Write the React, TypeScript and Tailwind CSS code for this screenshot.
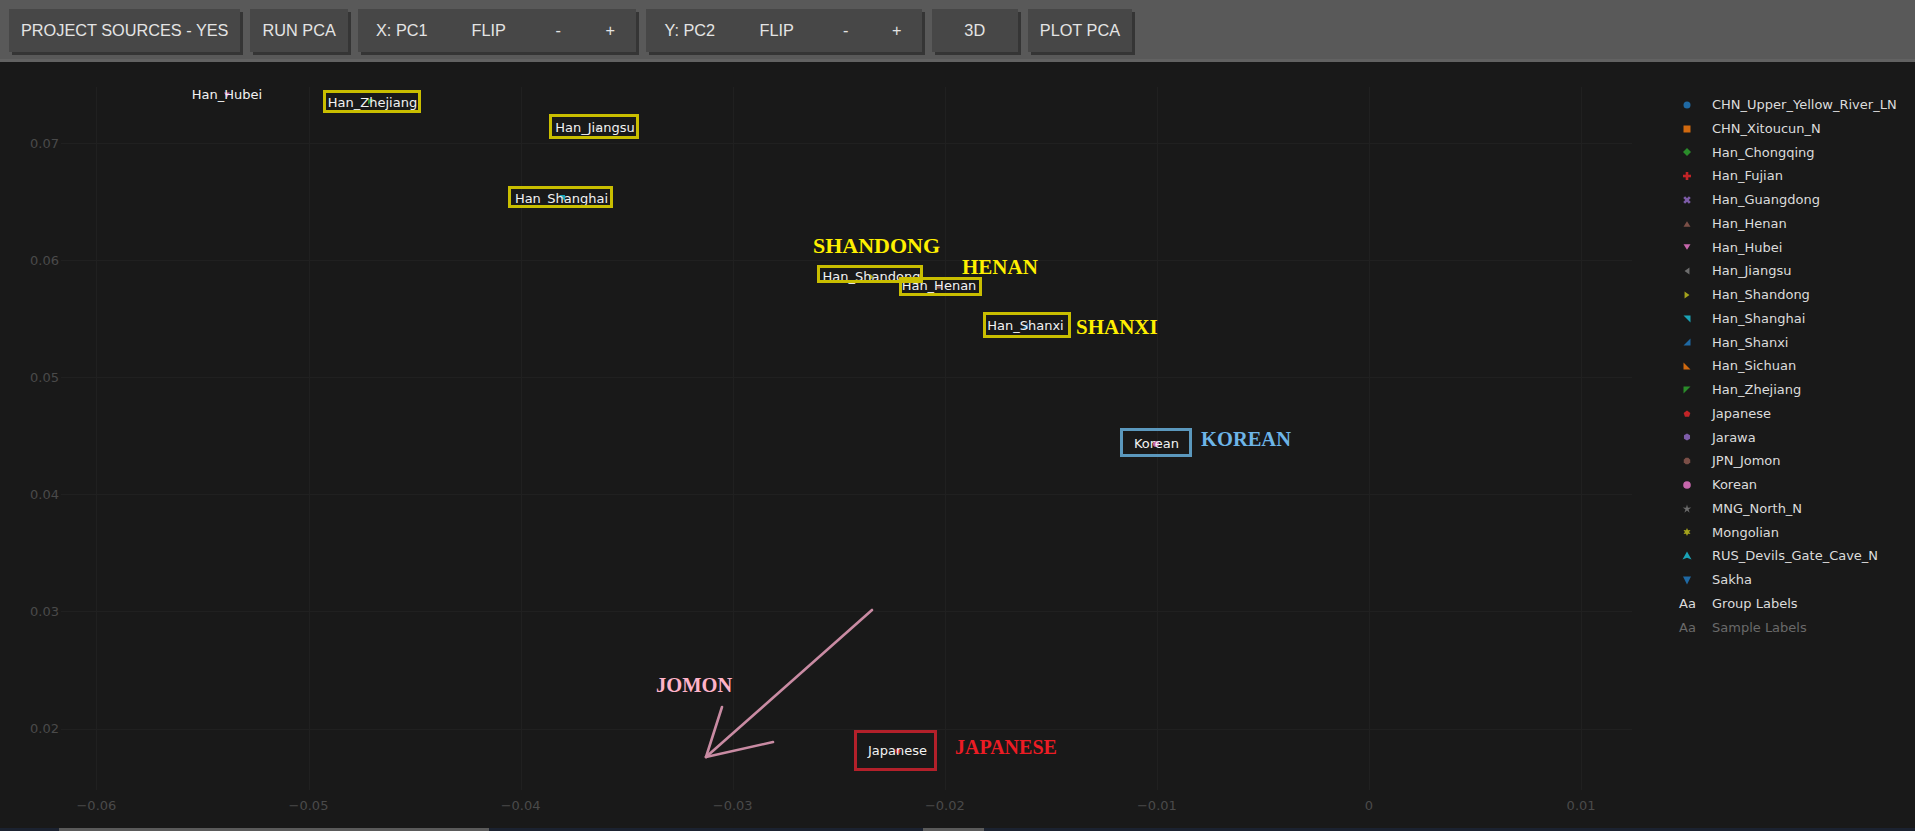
import React from "react";

type Shape =
  | "circle"
  | "square"
  | "diamond"
  | "plus"
  | "cross"
  | "triUp"
  | "triDown"
  | "triLeft"
  | "triRight"
  | "cornerTR"
  | "cornerBR"
  | "cornerBL"
  | "cornerTL"
  | "pentagon"
  | "hexagon"
  | "octagon"
  | "star5"
  | "star6"
  | "bigUp"
  | "bigDown";

const C = {
  blue: "#1f69a3",
  orange: "#d0690f",
  green: "#2a8c2a",
  red: "#c22427",
  purple: "#7d5ca8",
  brown: "#7b4f47",
  pink: "#c666ab",
  gray: "#6d6d6d",
  olive: "#a3a21c",
  cyan: "#1aa3b6",
};

const GROUPS: { name: string; shape: Shape; color: string }[] = [
  { name: "CHN_Upper_Yellow_River_LN", shape: "circle", color: C.blue },
  { name: "CHN_Xitoucun_N", shape: "square", color: C.orange },
  { name: "Han_Chongqing", shape: "diamond", color: C.green },
  { name: "Han_Fujian", shape: "plus", color: C.red },
  { name: "Han_Guangdong", shape: "cross", color: C.purple },
  { name: "Han_Henan", shape: "triUp", color: C.brown },
  { name: "Han_Hubei", shape: "triDown", color: C.pink },
  { name: "Han_Jiangsu", shape: "triLeft", color: C.gray },
  { name: "Han_Shandong", shape: "triRight", color: C.olive },
  { name: "Han_Shanghai", shape: "cornerTR", color: C.cyan },
  { name: "Han_Shanxi", shape: "cornerBR", color: C.blue },
  { name: "Han_Sichuan", shape: "cornerBL", color: C.orange },
  { name: "Han_Zhejiang", shape: "cornerTL", color: C.green },
  { name: "Japanese", shape: "pentagon", color: C.red },
  { name: "Jarawa", shape: "hexagon", color: C.purple },
  { name: "JPN_Jomon", shape: "octagon", color: C.brown },
  { name: "Korean", shape: "circle", color: C.pink },
  { name: "MNG_North_N", shape: "star5", color: C.gray },
  { name: "Mongolian", shape: "star6", color: C.olive },
  { name: "RUS_Devils_Gate_Cave_N", shape: "bigUp", color: C.cyan },
  { name: "Sakha", shape: "bigDown", color: C.blue },
];

function poly(x: number, y: number, r: number, n: number, rot = -Math.PI / 2) {
  const pts: string[] = [];
  for (let i = 0; i < n; i++) {
    const a = rot + (i * 2 * Math.PI) / n;
    pts.push(`${x + r * Math.cos(a)},${y + r * Math.sin(a)}`);
  }
  return pts.join(" ");
}

function star(x: number, y: number, r: number, inner: number, n: number) {
  const pts: string[] = [];
  for (let i = 0; i < n * 2; i++) {
    const a = -Math.PI / 2 + (i * Math.PI) / n;
    const rr = i % 2 === 0 ? r : inner;
    pts.push(`${x + rr * Math.cos(a)},${y + rr * Math.sin(a)}`);
  }
  return pts.join(" ");
}

function Marker({ shape, x, y, s, fill }: { shape: Shape; x: number; y: number; s: number; fill: string }) {
  switch (shape) {
    case "circle":
      return <circle cx={x} cy={y} r={s} fill={fill} />;
    case "square":
      return <rect x={x - s} y={y - s} width={s * 2} height={s * 2} fill={fill} />;
    case "diamond":
      return <polygon points={`${x},${y - s - 0.5} ${x + s + 0.5},${y} ${x},${y + s + 0.5} ${x - s - 0.5},${y}`} fill={fill} />;
    case "plus":
    case "cross":
      return (
        <g fill={fill} transform={shape === "cross" ? `rotate(45 ${x} ${y})` : undefined}>
          <rect x={x - s - 0.5} y={y - 1.3} width={s * 2 + 1} height={2.6} />
          <rect x={x - 1.3} y={y - s - 0.5} width={2.6} height={s * 2 + 1} />
        </g>
      );
    case "triUp":
      return <polygon points={`${x},${y - s * 0.8} ${x + s},${y + s * 0.8} ${x - s},${y + s * 0.8}`} fill={fill} />;
    case "triDown":
      return <polygon points={`${x - s},${y - s * 0.8} ${x + s},${y - s * 0.8} ${x},${y + s * 0.8}`} fill={fill} />;
    case "triLeft":
      return <polygon points={`${x + s * 0.7},${y - s} ${x + s * 0.7},${y + s} ${x - s * 0.7},${y}`} fill={fill} />;
    case "triRight":
      return <polygon points={`${x - s * 0.7},${y - s} ${x - s * 0.7},${y + s} ${x + s * 0.7},${y}`} fill={fill} />;
    case "cornerTR":
      return <polygon points={`${x - s},${y - s} ${x + s},${y - s} ${x + s},${y + s}`} fill={fill} />;
    case "cornerBR":
      return <polygon points={`${x + s},${y - s} ${x + s},${y + s} ${x - s},${y + s}`} fill={fill} />;
    case "cornerBL":
      return <polygon points={`${x - s},${y - s} ${x - s},${y + s} ${x + s},${y + s}`} fill={fill} />;
    case "cornerTL":
      return <polygon points={`${x - s},${y - s} ${x + s},${y - s} ${x - s},${y + s}`} fill={fill} />;
    case "pentagon":
      return <polygon points={poly(x, y, s, 5)} fill={fill} />;
    case "hexagon":
      return <polygon points={poly(x, y, s, 6)} fill={fill} />;
    case "octagon":
      return <polygon points={poly(x, y, s, 8, Math.PI / 8)} fill={fill} />;
    case "star5":
      return <polygon points={star(x, y, s + 1, s * 0.45, 5)} fill={fill} />;
    case "star6":
      return <polygon points={star(x, y, s + 0.5, s * 0.6, 6)} fill={fill} />;
    case "bigUp":
      return <polygon points={`${x},${y - s - 1} ${x + s + 1},${y + s} ${x},${y + s * 0.5} ${x - s - 1},${y + s}`} fill={fill} />;
    case "bigDown":
      return <polygon points={`${x - s - 0.5},${y - s} ${x + s + 0.5},${y - s} ${x},${y + s + 1}`} fill={fill} />;
  }
}

// axis mapping: 0.01 units is ~212px across and ~117px down
const xOf = (v: number) => 1369 + v * 21210;
const yOf = (v: number) => 143 + (0.07 - v) * 11710;

const X_TICKS = [-0.06, -0.05, -0.04, -0.03, -0.02, -0.01, 0, 0.01];
const Y_TICKS = [0.07, 0.06, 0.05, 0.04, 0.03, 0.02];

const POINTS: { label: string; shape: Shape; color: string; mx: number; my: number; tx: number; ty: number }[] = [
  { label: "Han_Hubei", shape: "triDown", color: C.pink, mx: 227, my: 95, tx: 227, ty: 94 },
  { label: "Han_Zhejiang", shape: "cornerTL", color: C.green, mx: 371, my: 102, tx: 372.5, ty: 102 },
  { label: "Han_Jiangsu", shape: "triLeft", color: C.gray, mx: 597, my: 128, tx: 595, ty: 127 },
  { label: "Han_Shanghai", shape: "cornerTR", color: C.cyan, mx: 562, my: 198, tx: 561.5, ty: 198 },
  { label: "Han_Shandong", shape: "triRight", color: C.olive, mx: 872, my: 277, tx: 871.5, ty: 276 },
  { label: "Han_Henan", shape: "triUp", color: C.brown, mx: 939, my: 286, tx: 939, ty: 285 },
  { label: "Han_Shanxi", shape: "cornerBR", color: C.blue, mx: 1025, my: 326, tx: 1025.5, ty: 325 },
  { label: "Korean", shape: "circle", color: C.pink, mx: 1156, my: 444, tx: 1156.5, ty: 443 },
  { label: "Japanese", shape: "pentagon", color: C.red, mx: 898, my: 751, tx: 897.5, ty: 750 },
];

// highlight boxes drawn around selected labels: [left, top, right, bottom, colour]
const BOXES: [number, number, number, number, string][] = [
  [323, 90, 421, 113, "#c9be00"],
  [549, 114, 639, 139, "#c9be00"],
  [508, 186, 613, 208, "#c9be00"],
  [817, 265, 923, 283, "#c9be00"],
  [899, 277, 982, 296, "#c9be00"],
  [983, 312, 1071, 338, "#c9be00"],
  [1120, 428, 1192, 457, "#5b98bd"],
  [854, 730, 937, 771, "#b3202a"],
];

const NOTES: { text: string; x: number; y: number; size: number; color: string }[] = [
  { text: "SHANDONG", x: 813, y: 253, size: 22, color: "#fff000" },
  { text: "HENAN", x: 962, y: 274, size: 21, color: "#fff000" },
  { text: "SHANXI", x: 1076, y: 334, size: 21, color: "#fff000" },
  { text: "KOREAN", x: 1201, y: 446, size: 20.5, color: "#6db5e8" },
  { text: "JOMON", x: 656, y: 692, size: 20.5, color: "#ffb3c9" },
  { text: "JAPANESE", x: 955, y: 754, size: 20, color: "#ec1c24" },
];

function Segment({ label, w }: { label: string; w: string }) {
  return <div className={`flex h-full items-center justify-center ${w}`}>{label}</div>;
}

function Toolbar() {
  const btn = "flex h-[43px] items-center bg-[#474747] shadow-[3px_3px_0_#353535]";
  return (
    <div className="flex h-[62px] shrink-0 items-start gap-[10px] border-b-[3px] border-[#626262] bg-[#595959] pt-[9px] pl-[9px] text-[16.3px] text-[#e4e4e4] font-['Liberation_Sans',Arial,sans-serif]">
      <div className={`${btn} px-3`}>PROJECT SOURCES - YES</div>
      <div className={`${btn} px-3`}>RUN PCA</div>
      <div className={btn}>
        <Segment label="X: PC1" w="w-[88px]" />
        <Segment label="FLIP" w="w-[86px]" />
        <Segment label="-" w="w-[53px]" />
        <Segment label="+" w="w-[51px]" />
      </div>
      <div className={btn}>
        <Segment label="Y: PC2" w="w-[88px]" />
        <Segment label="FLIP" w="w-[86px]" />
        <Segment label="-" w="w-[52px]" />
        <Segment label="+" w="w-[50px]" />
      </div>
      <div className={`${btn} w-[86px] justify-center`}>3D</div>
      <div className={`${btn} px-3`}>PLOT PCA</div>
    </div>
  );
}

function fmt(v: number) {
  if (v === 0) return "0";
  const s = Math.abs(v).toFixed(2);
  return v < 0 ? `\u2212${s}` : s;
}

function Chart() {
  return (
    <svg width={1665} height={766} viewBox="0 62 1665 766" className="shrink-0">
      <g stroke="#202020" strokeWidth={1}>
        {Y_TICKS.map((v) => (
          <line key={v} x1={61} x2={1632} y1={Math.round(yOf(v)) + 0.5} y2={Math.round(yOf(v)) + 0.5} />
        ))}
        {X_TICKS.map((v) => (
          <line key={v} x1={Math.round(xOf(v)) + 0.5} x2={Math.round(xOf(v)) + 0.5} y1={87} y2={790} />
        ))}
      </g>
      <g fill="#4a4a4a" fontFamily="'DejaVu Sans', sans-serif" fontSize={13}>
        {Y_TICKS.map((v) => (
          <text key={v} x={59} y={yOf(v)} textAnchor="end" dominantBaseline="central">
            {v.toFixed(2)}
          </text>
        ))}
        {X_TICKS.map((v) => (
          <text key={v} x={xOf(v)} y={805} textAnchor="middle" dominantBaseline="central">
            {fmt(v)}
          </text>
        ))}
      </g>

      {POINTS.map((p) => (
        <Marker key={p.label} shape={p.shape} x={p.mx} y={p.my} s={3} fill={p.color} />
      ))}
      <g fill="#f2f2f2" fontFamily="'DejaVu Sans', sans-serif" fontSize={13}>
        {POINTS.map((p) => (
          <text key={p.label} x={p.tx} y={p.ty} textAnchor="middle" dominantBaseline="central">
            {p.label}
          </text>
        ))}
      </g>

      {BOXES.map(([l, t, r, b, c]) => (
        <rect key={`${l}-${t}`} x={l + 1.5} y={t + 1.5} width={r - l - 3} height={b - t - 3} fill="none" stroke={c} strokeWidth={3} />
      ))}

      <g fontFamily="'Liberation Serif', 'Times New Roman', serif" fontWeight={700}>
        {NOTES.map((n) => (
          <text key={n.text} x={n.x} y={n.y} fontSize={n.size} fill={n.color}>
            {n.text}
          </text>
        ))}
      </g>

      {/* arrow pointing at the Jomon cluster */}
      <g stroke="#c98ba3" strokeWidth={2.6} strokeLinecap="round" fill="none">
        <line x1={872} y1={610} x2={706} y2={757} />
        <line x1={706} y1={757} x2={722} y2={707} />
        <line x1={706} y1={757} x2={773} y2={742} />
      </g>
    </svg>
  );
}

function Legend() {
  return (
    <div className="flex flex-col pt-[31px] pl-[14px] text-[13px] text-[#dcdcdc] font-['DejaVu_Sans',sans-serif]">
      {GROUPS.map((g) => (
        <div key={g.name} className="flex h-[23.75px] items-center gap-[17px]">
          <svg width={16} height={12} viewBox="0 0 16 12" className="shrink-0">
            <Marker shape={g.shape} x={8} y={6} s={g.name === "Korean" ? 3.8 : 3.5} fill={g.color} />
          </svg>
          <span>{g.name}</span>
        </div>
      ))}
      <div className="flex h-[23.75px] items-center gap-[17px]">
        <span className="w-4 text-center">Aa</span>
        <span>Group Labels</span>
      </div>
      <div className="flex h-[23.75px] items-center gap-[17px] text-[#6a6a6a]">
        <span className="w-4 text-center">Aa</span>
        <span>Sample Labels</span>
      </div>
    </div>
  );
}

export default function App() {
  return (
    <div className="flex h-[831px] w-[1915px] flex-col overflow-hidden bg-[#191919]">
      <Toolbar />
      <div className="flex flex-1">
        <Chart />
        <Legend />
      </div>
      <div className="flex h-[3px] shrink-0 bg-[#1b2230]">
        <div className="ml-[59px] w-[430px] bg-[#5a5a5a]" />
        <div className="ml-[434px] w-[61px] bg-[#5a5a5a]" />
      </div>
    </div>
  );
}
